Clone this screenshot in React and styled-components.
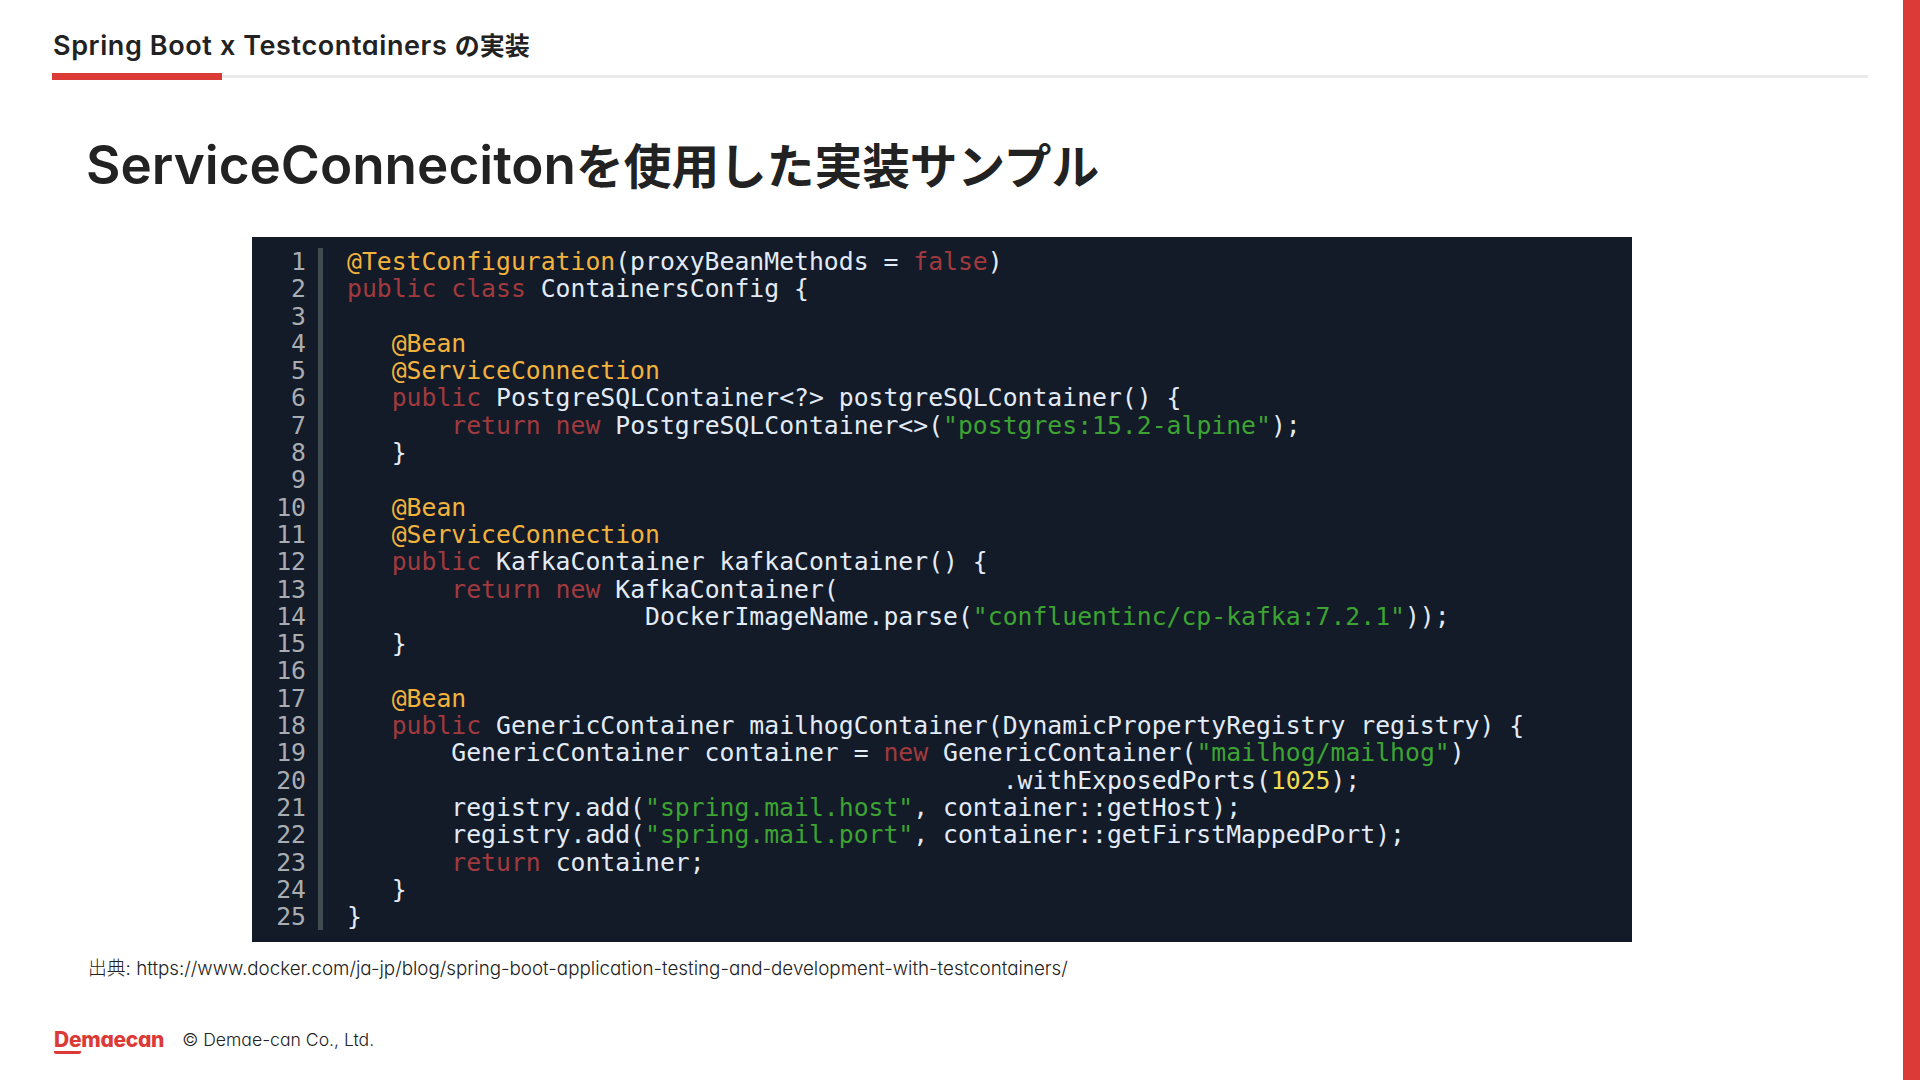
import React from "react";
import styled, { createGlobalStyle } from "styled-components";

const Global = createGlobalStyle`
  html, body { margin: 0; padding: 0; background: #fff; }
  body { width: 1920px; height: 1080px; overflow: hidden; }
`;

const sans = `Inter, "Noto Sans CJK JP", sans-serif`;

const Slide = styled.div`
  width: 1920px;
  height: 1080px;
  display: flex;
  background: #fff;
  font-family: ${sans};
  font-feature-settings: "cv11" 1;
  color: #222;
`;
const Main = styled.main`
  width: 1903px;
  display: flex;
  flex-direction: column;
  padding: 28px 35px 0 52px;
  box-sizing: border-box;
`;
const SideBar = styled.div`
  width: 17px;
  background: #dc3a36;
`;
const Section = styled.div`
  font-size: 27px;
  font-weight: 600;
  line-height: 36px;
  height: 45px;
  margin-left: 1px;
  letter-spacing: 0.6px;
`;
const SectionJa = styled.span`
  font-size: 25px;
  letter-spacing: 0;
`;
const Rule = styled.div`
  height: 3px;
  margin-top: 2px;
  background: #e9e9e9;
`;
const RuleAccent = styled.div`
  width: 170px;
  height: 7px;
  transform: translateY(-2px);
  background: #dc3a36;
`;
const Title = styled.h1`
  margin: 55px 0 0 34px;
  font-size: 53px;
  font-weight: 600;
  line-height: 64px;
  color: #222;
`;
const TitleJa = styled.span`
  font-size: 47.7px;
`;
const Panel = styled.div`
  margin: 38px 0 0 200px;
  width: 1380px;
  height: 705px;
  box-sizing: border-box;
  background: #131a28;
  padding: 11px 0 12px 0;
  display: flex;
  font-family: "DejaVu Sans Mono", monospace;
  font-size: 24.75px;
  line-height: 27.3px;
`;
const Numbers = styled.div`
  width: 54px;
  text-align: right;
  color: #a9adb1;
  white-space: pre;
`;
const Gutter = styled.div`
  width: 5px;
  margin-left: 12px;
  background: #3f4d53;
`;
const Code = styled.div`
  margin-left: 24px;
  white-space: pre;
  color: #e2ebf6;
`;
const Line = styled.div`
  height: 27.3px;
`;
const tokenColors = {
  a: "#f2b33d",
  k: "#a13a3e",
  s: "#3da332",
  n: "#efdc4e",
};
const Token = styled.span`
  color: ${(p) => tokenColors[p.$kind]};
`;
const Source = styled.p`
  margin: 13px 0 0 36px;
  font-size: 18.8px;
  line-height: 28px;
  font-weight: 300;
  color: #222;
  white-space: pre;
`;
const Footer = styled.footer`
  margin: 43px 0 0 2px;
  display: flex;
  align-items: center;
  gap: 18px;
`;
const Logo = styled.div`
  font-size: 21px;
  font-weight: 800;
  letter-spacing: -0.3px;
  line-height: 28px;
  color: #dc3a36;
`;
const LogoMark = styled.span`
  display: inline-block;
  line-height: 22px;
  border-bottom: 3px solid #dc3a36;
  border-radius: 2px;
`;
const Copy = styled.div`
  font-size: 17.6px;
  line-height: 28px;
  font-weight: 300;
  color: #222;
`;

const lines = [
  [["a", "@TestConfiguration"], "(proxyBeanMethods = ", ["k", "false"], ")"],
  [["k", "public class "], "ContainersConfig {"],
  [],
  ["   ", ["a", "@Bean"]],
  ["   ", ["a", "@ServiceConnection"]],
  ["   ", ["k", "public "], "PostgreSQLContainer<?> postgreSQLContainer() {"],
  ["       ", ["k", "return new "], "PostgreSQLContainer<>(", ["s", "\"postgres:15.2-alpine\""], ");"],
  ["   }"],
  [],
  ["   ", ["a", "@Bean"]],
  ["   ", ["a", "@ServiceConnection"]],
  ["   ", ["k", "public "], "KafkaContainer kafkaContainer() {"],
  ["       ", ["k", "return new "], "KafkaContainer("],
  ["                    DockerImageName.parse(", ["s", "\"confluentinc/cp-kafka:7.2.1\""], "));"],
  ["   }"],
  [],
  ["   ", ["a", "@Bean"]],
  ["   ", ["k", "public "], "GenericContainer mailhogContainer(DynamicPropertyRegistry registry) {"],
  ["       GenericContainer container = ", ["k", "new "], "GenericContainer(", ["s", "\"mailhog/mailhog\""], ")"],
  ["                                            .withExposedPorts(", ["n", "1025"], ");"],
  ["       registry.add(", ["s", "\"spring.mail.host\""], ", container::getHost);"],
  ["       registry.add(", ["s", "\"spring.mail.port\""], ", container::getFirstMappedPort);"],
  ["       ", ["k", "return "], "container;"],
  ["   }"],
  ["}"],
];

export default function App() {
  return (
    <>
      <Global />
      <Slide>
        <Main>
          <Section>Spring Boot x Testcontainers <SectionJa>の実装</SectionJa></Section>
          <Rule>
            <RuleAccent />
          </Rule>
          <Title>ServiceConneciton<TitleJa>を使用した実装サンプル</TitleJa></Title>
          <Panel>
            <Numbers>{lines.map((_, i) => `${i + 1}\n`)}</Numbers>
            <Gutter />
            <Code>
              {lines.map((parts, i) => (
                <Line key={i}>
                  {parts.map((p, j) =>
                    typeof p === "string" ? p : <Token key={j} $kind={p[0]}>{p[1]}</Token>
                  )}
                </Line>
              ))}
            </Code>
          </Panel>
          <Source>出典: https://www.docker.com/ja-jp/blog/spring-boot-application-testing-and-development-with-testcontainers/</Source>
          <Footer>
            <Logo><LogoMark>De</LogoMark>maecan</Logo>
            <Copy>© Demae-can Co., Ltd.</Copy>
          </Footer>
        </Main>
        <SideBar />
      </Slide>
    </>
  );
}
